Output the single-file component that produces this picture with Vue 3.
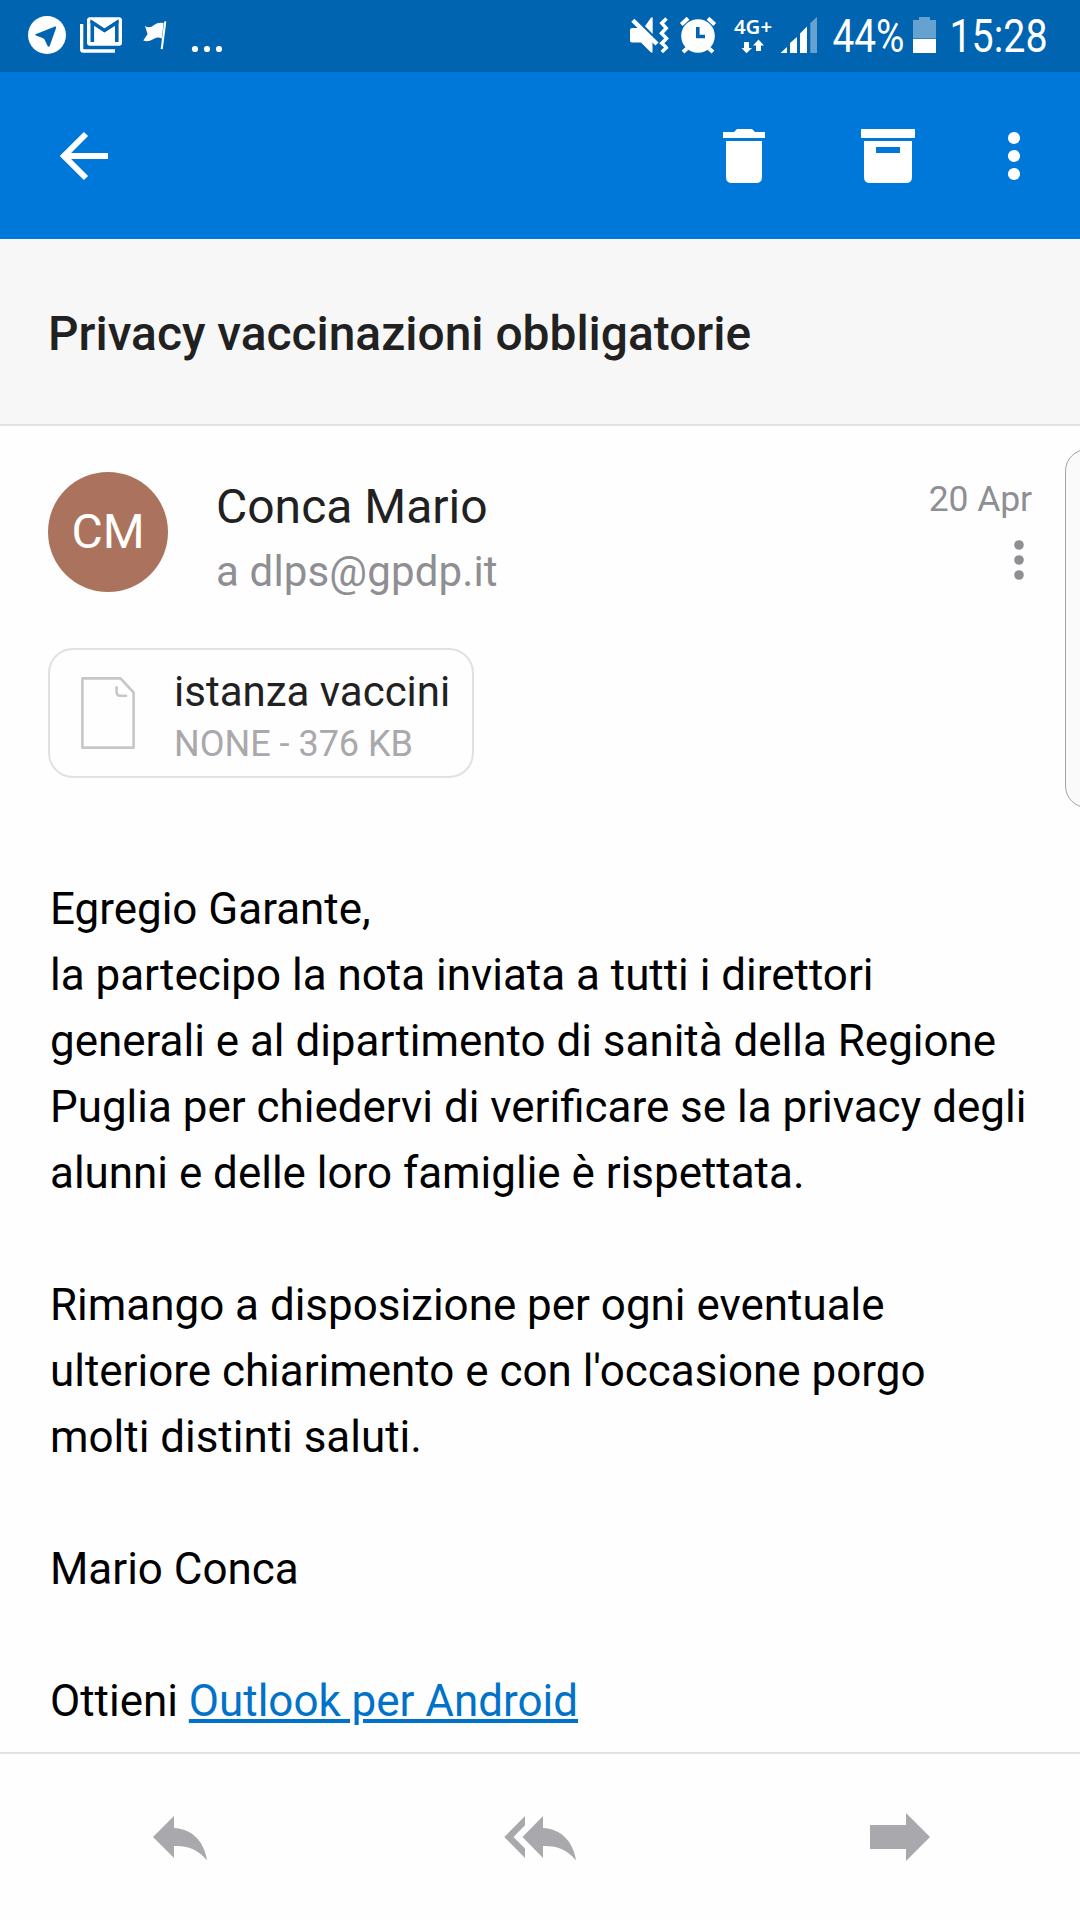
<script setup>
import { reactive } from "vue";

const mail = reactive({
  subject: "Privacy vaccinazioni obbligatorie",
  sender: "Conca Mario",
  initials: "CM",
  recipient: "a dlps@gpdp.it",
  date: "20 Apr",
});

const attachment = {
  name: "istanza vaccini",
  info: "NONE - 376 KB",
};
</script>

<template>
  <div class="screen">
    <header class="status">
      <svg class="telegram" width="44" height="72" viewBox="28 0 44 72">
        <circle cx="47" cy="35" r="19" fill="#fff" />
        <path d="M35.6 34.2 55 26.6Q56.4 26.4 56.1 28L49.7 46Q48.6 47.6 47.6 46L44.6 39.6Q43.6 38.4 42 37.8L35.8 35.4Q35 34.7 35.6 34.2Z" fill="#0064b0" />
      </svg>
      <svg width="60" height="72" viewBox="72 0 60 72">
        <path d="M80 24h3.3v25.2h31.7v3.5H83.5Q80 52.7 80 49.2Z" fill="#fff" />
        <rect x="87" y="17.2" width="35" height="28.6" rx="3" fill="#fff" />
        <path d="M92.3 42V22.6L104.5 30.4 116.8 22.6V42" fill="none" stroke="#0064b0" stroke-width="3.6" />
        <path d="M90.5 21.2 104.5 30.6 118.5 21.2" fill="none" stroke="#0064b0" stroke-width="2.6" />
      </svg>
      <svg width="50" height="72" viewBox="132 0 50 72">
        <path d="M145 26Q150 29 154 25Q158 22 163.6 23L161.8 38.5Q158 36.5 154 38.8Q149 42.4 143.3 40.6L147.6 34Z" fill="#fff" />
        <path d="M165.3 21.4 161.7 49.2" stroke="#fff" stroke-width="2.1" />
      </svg>
      <svg width="48" height="72" viewBox="182 0 48 72" fill="#fff">
        <circle cx="195" cy="49" r="3.1" />
        <circle cx="207" cy="49" r="3.1" />
        <circle cx="219" cy="49" r="3.1" />
      </svg>

      <div class="status-right">
        <svg width="50" height="72" viewBox="624 0 50 72">
          <path d="M632 28H639L652.5 42V52.5H651L641 42.5H632Q630 42.5 630 40.5V30Q630 28 632 28Z" fill="#fff" />
          <path d="M651 17.5H652.7V34L645 26.2Z" fill="#fff" />
          <path d="M632.8 20.3 657 44" stroke="#fff" stroke-width="4.4" />
          <path d="M666.5 18.5 661.8 23.2 666.2 28.2 661.5 33.2 666.5 38.4 661.8 43.2 665.7 46.8 666.3 47.8 661.8 52" fill="none" stroke="#fff" stroke-width="3.5" />
        </svg>
        <svg width="52" height="72" viewBox="674 0 52 72">
          <circle cx="698" cy="36" r="16.8" fill="#fff" />
          <path d="M681.3 24.5 688 18.3M708 18.3 714.8 24.5M687 48.5 683 52M709 48.5 713 52" stroke="#fff" stroke-width="4" />
          <path d="M697.8 27V36.5H705" fill="none" stroke="#0064b0" stroke-width="3.6" />
        </svg>
        <svg width="50" height="72" viewBox="726 0 50 72" fill="#fff">
          <text class="network" x="734" y="34" textLength="38" lengthAdjust="spacingAndGlyphs">4G+</text>
          <path d="M744 42H749V48H752L746.5 53.3 741.5 48H744ZM756 51V45.5H753L758.5 39.5 764 45.5H761V51Z" />
        </svg>
        <svg width="48" height="72" viewBox="776 0 48 72" fill="#fff">
          <path d="M780.5 53 787 47V53ZM790 43 797 37V53H790ZM800 33.5 807 26.5V53H800Z" />
          <path d="M810.3 23 817 17V53H810.3Z" opacity=".4" />
        </svg>
        <svg width="84" height="72" viewBox="824 0 84 72" fill="#fff">
          <text class="digits" x="832.5" y="52.2" textLength="72" lengthAdjust="spacingAndGlyphs">44%</text>
        </svg>
        <svg width="36" height="72" viewBox="908 0 36 72" fill="#fff">
          <path d="M913 38.5V20H919V17H930V20H936V38.5Z" opacity=".4" />
          <path d="M913 39H936V53H913Z" />
        </svg>
        <svg width="136" height="72" viewBox="944 0 136 72" fill="#fff">
          <text class="digits" x="949.5" y="52.2" textLength="98" lengthAdjust="spacingAndGlyphs">15:28</text>
        </svg>
      </div>
    </header>

    <nav class="toolbar">
      <svg width="120" height="167" viewBox="24 72 120 167">
        <path d="M86 134 64 156 86 178M66 156H108" fill="none" stroke="#fff" stroke-width="6" />
      </svg>
      <span class="spacer"></span>
      <svg width="100" height="167" viewBox="694 72 100 167" fill="#fff">
        <path d="M723 132H734L737 129H752L755 132H765V138H723ZM726 141H762V177Q762 183 756 183H732Q726 183 726 177Z" />
      </svg>
      <svg width="180" height="167" viewBox="794 72 180 167" fill="#fff">
        <path d="M861 129H915V138H861Z" />
        <path fill-rule="evenodd" d="M864 141H912V177Q912 183 906 183H870Q864 183 864 177ZM876 147V153H900V147Z" />
      </svg>
      <svg width="106" height="167" viewBox="974 72 106 167" fill="#fff">
        <circle cx="1014" cy="138" r="6.1" />
        <circle cx="1014" cy="156" r="6.1" />
        <circle cx="1014" cy="174" r="6.1" />
      </svg>
    </nav>

    <h1 class="subject">{{ mail.subject }}</h1>

    <main class="message">
      <div class="head">
        <div class="avatar">{{ mail.initials }}</div>
        <div class="people">
          <div class="sender">{{ mail.sender }}</div>
          <div class="recipient">{{ mail.recipient }}</div>
        </div>
        <div class="meta">
          <div class="date">{{ mail.date }}</div>
          <svg width="30" height="50" viewBox="1004 535 30 50" fill="#8e8e93">
            <circle cx="1019" cy="545" r="4.8" />
            <circle cx="1019" cy="560" r="4.8" />
            <circle cx="1019" cy="575" r="4.8" />
          </svg>
        </div>
      </div>

      <div class="attachment">
        <svg width="54" height="72" viewBox="81 677 54 72" fill="none" stroke="#c7c7c9" stroke-width="2.6" stroke-linejoin="round" stroke-linecap="round">
          <path d="M82.4 678.4H120.5L133.6 692.5V747.6H82.4Z" />
          <path d="M116.6 687.3V692Q116.6 695.8 120.2 695.8H126" />
        </svg>
        <div>
          <div class="file-name">{{ attachment.name }}</div>
          <div class="file-info">{{ attachment.info }}</div>
        </div>
      </div>

      <div class="body">
        <p>
          Egregio Garante,<br />
          la partecipo la nota inviata a tutti i direttori<br />
          generali e al dipartimento di sanità della Regione<br />
          Puglia per chiedervi di verificare se la privacy degli<br />
          alunni e delle loro famiglie è rispettata.
        </p>
        <p>
          Rimango a disposizione per ogni eventuale<br />
          ulteriore chiarimento e con l'occasione porgo<br />
          molti distinti saluti.
        </p>
        <p>Mario Conca</p>
        <p>Ottieni <a href="#">Outlook per Android</a></p>
      </div>
    </main>

    <footer class="actions">
      <svg width="360" height="166" viewBox="0 1754 360 166">
        <path d="M153 1837 174 1816V1828C193 1829 204 1842 207 1860.500C198 1849 187 1845.500 174 1846V1858Z" />
      </svg>
      <svg width="360" height="166" viewBox="360 1754 360 166">
        <path d="M504.300 1837 525 1816V1825.200L513.500 1837 525 1848.600V1858Z" />
        <path d="M522.500 1837 543 1816V1828C562 1829 573 1842 576 1860.500C567 1849 556 1845.500 543 1846V1858Z" />
      </svg>
      <svg width="360" height="166" viewBox="720 1754 360 166">
        <path d="M870 1825H906V1813L930 1837 906 1861V1849H870Z" />
      </svg>
    </footer>

    <!-- edge panel handle -->
    <div class="edge-panel"></div>
  </div>
</template>

<style>
body {
  margin: 0;
  background: #fff;
}
</style>

<style scoped>
.screen {
  position: relative;
  display: flex;
  flex-direction: column;
  width: 1080px;
  height: 1920px;
  overflow: hidden;
  background: #fefefe;
  font-family: Roboto, "Liberation Sans", sans-serif;
}

svg {
  display: block;
  flex: none;
  overflow: visible;
}

.status {
  display: flex;
  flex: none;
  height: 72px;
  background: #0064b0;
}

.telegram {
  margin-left: 28px;
}

.status-right {
  display: flex;
  margin-left: auto;
}

.network {
  font: 600 19px "Noto Sans", "Open Sans", sans-serif;
}

.digits {
  font-size: 45.5px;
}

.toolbar {
  display: flex;
  flex: none;
  height: 167px;
  padding-left: 24px;
  background: #0078d9;
}

.spacer {
  flex: 1;
}

.subject {
  box-sizing: border-box;
  flex: none;
  height: 187px;
  margin: 0;
  padding: 67px 48px 0;
  border-bottom: 2px solid #e1e1e1;
  background: #f7f7f7;
  color: #212121;
  font-size: 47.9px;
  font-weight: 500;
  line-height: 56px;
}

.message {
  flex: 1;
  min-height: 0;
  padding: 46px 48px 0;
}

.head {
  display: flex;
  height: 176px;
}

.avatar {
  width: 120px;
  height: 120px;
  margin-right: 48px;
  border-radius: 50%;
  background: #ab735e;
  color: #fff;
  font-size: 48px;
  line-height: 120px;
  text-align: center;
}

.people {
  flex: 1;
  padding-top: 7px;
}

.sender {
  color: #212121;
  font-size: 48px;
  line-height: 56px;
}

.recipient {
  margin-top: 12px;
  color: #8e8e93;
  font-size: 42px;
  letter-spacing: 0.15px;
  line-height: 50px;
}

.meta {
  display: flex;
  flex-direction: column;
  align-items: flex-end;
  padding-top: 6px;
}

.date {
  margin-bottom: 15px;
  color: #8e8e93;
  font-size: 35.5px;
  letter-spacing: -0.1px;
  line-height: 42px;
}

.meta svg {
  margin-right: -2px;
}

.attachment {
  display: flex;
  box-sizing: border-box;
  width: 426px;
  height: 130px;
  padding: 27px 0 0 31px;
  border: 2px solid #e1e1e1;
  border-radius: 25px;
}

.attachment svg {
  margin-right: 39px;
}

.file-name {
  margin-top: -10px;
  color: #212121;
  font-size: 42px;
  line-height: 50px;
  white-space: nowrap;
}

.file-info {
  margin-top: 6px;
  color: #a8a8ad;
  font-size: 36px;
  line-height: 42px;
}

.body {
  margin-top: 98px;
  padding-left: 2px;
  color: #000;
  font-size: 43.95px;
  line-height: 66px;
  white-space: nowrap;
}

.body p {
  margin: 0 0 66px;
}

.body p:last-child {
  margin-bottom: 0;
}

.body a {
  color: #0072c9;
}

.actions {
  display: flex;
  flex: none;
  height: 166px;
  border-top: 2px solid #e1e1e1;
  fill: #a8a8ad;
}

.edge-panel {
  position: absolute;
  top: 449px;
  left: 1065px;
  box-sizing: border-box;
  width: 50px;
  height: 359px;
  border: 1.5px solid #a3a3a3;
  border-radius: 22px;
  background: #fafafa;
}
</style>
